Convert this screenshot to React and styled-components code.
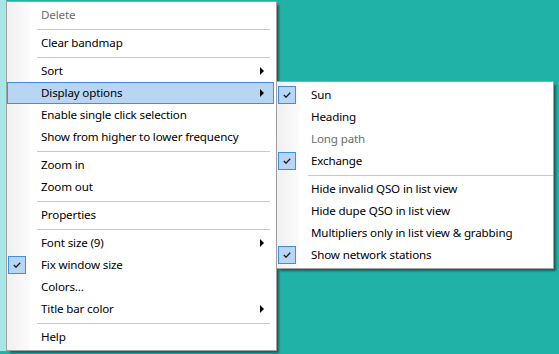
import React from "react";
import styled, { createGlobalStyle } from "styled-components";

const GlobalStyle = createGlobalStyle`
  html, body {
    margin: 0;
    padding: 0;
    width: 559px;
    height: 354px;
    overflow: hidden;
    font-family: "Noto Sans", "Open Sans", sans-serif;
    font-size: 11.6px;
    letter-spacing: -0.15px;
  }
`;

const Desktop = styled.div`
  display: flex;
  width: 559px;
  height: 354px;
  background: #21b2a7;
`;

const LeftStrip = styled.div`
  width: 6px;
  height: 351px;
  background: #a7e6e4;
  border-right: 1px solid #6fa9a6;
`;

const Stage = styled.div`
  position: relative;
  flex: 1;
  padding-top: 1px;
`;

const Menu = styled.div`
  width: ${(p) => p.$width}px;
  background: #fff;
  border: 1px solid #a0a0a0;
  padding: 2px 0;
  box-shadow: 3px 3px 2px -1px rgba(0, 0, 0, 0.45);
  position: relative;
  box-sizing: border-box;

  &::before {
    content: "";
    position: absolute;
    left: 0;
    top: 0;
    bottom: 0;
    width: 22px;
    background: linear-gradient(to right, #f0f0f0, #fbfbfb);
  }
`;

const MainMenu = styled(Menu)`
  margin-left: -1px;
`;

const SubMenu = styled(Menu)`
  position: absolute;
  left: 269px;
  top: 81px;
  z-index: 2;
`;

const Item = styled.div`
  position: relative;
  z-index: 1;
  height: 22px;
  display: flex;
  align-items: center;
  padding-left: 33px;
  padding-bottom: 1px;
  margin: 0 2px 0 0;
  color: ${(p) => (p.$disabled ? "#6d6d6d" : "#000")};
  white-space: nowrap;
  box-sizing: border-box;
  border: 1px solid ${(p) => (p.$active ? "#3d8ee4" : "transparent")};
  background: ${(p) => (p.$active ? "#b8d6f4" : "transparent")};
`;

const Check = styled.span`
  position: absolute;
  left: 0;
  top: 1px;
  width: 18px;
  height: 18px;
  box-sizing: border-box;
  border: 1px solid #3d8ee4;
  background: #b8d6f4;
  display: flex;
  align-items: center;
  justify-content: center;
`;

const Arrow = styled.span`
  position: absolute;
  right: 9px;
  top: 6px;
  width: 0;
  height: 0;
  border-top: 4px solid transparent;
  border-bottom: 4px solid transparent;
  border-left: 4px solid #000;
`;

const Separator = styled.div`
  position: relative;
  z-index: 1;
  height: 6px;
  display: flex;
  align-items: center;
  padding-left: ${(p) => p.$indent}px;
  padding-right: ${(p) => p.$right}px;

  &::after {
    content: "";
    flex: 1;
    height: 1px;
    background: #c8c8c8;
  }
`;

const CheckMark = () => (
  <svg width="8" height="6" viewBox="0 0 8 6">
    <polyline
      points="0.8,3 3,5.2 7.2,0.8"
      fill="none"
      stroke="#1a1a1a"
      strokeWidth="1.3"
    />
  </svg>
);

const mainItems = [
  { label: "Delete", disabled: true },
  "sep",
  { label: "Clear bandmap" },
  "sep",
  { label: "Sort", sub: true },
  { label: "Display options", sub: true, active: true },
  { label: "Enable single click selection" },
  { label: "Show from higher to lower frequency" },
  "sep",
  { label: "Zoom in" },
  { label: "Zoom out" },
  "sep",
  { label: "Properties" },
  "sep",
  { label: "Font size (9)", sub: true },
  { label: "Fix window size", checked: true },
  { label: "Colors..." },
  { label: "Title bar color", sub: true },
  "sep",
  { label: "Help" },
];

const subItems = [
  { label: "Sun", checked: true },
  { label: "Heading" },
  { label: "Long path", disabled: true },
  { label: "Exchange", checked: true },
  "sep",
  { label: "Hide invalid QSO in list view" },
  { label: "Hide dupe QSO in list view" },
  { label: "Multipliers only in list view & grabbing" },
  { label: "Show network stations", checked: true },
];

function renderItems(items, sepIndent, sepRight) {
  return items.map((it, i) =>
    it === "sep" ? (
      <Separator key={i} $indent={sepIndent} $right={sepRight} />
    ) : (
      <Item key={i} $disabled={it.disabled} $active={it.active}>
        {it.checked && (
          <Check>
            <CheckMark />
          </Check>
        )}
        {it.label}
        {it.sub && <Arrow />}
      </Item>
    )
  );
}

export default function App() {
  return (
    <>
      <GlobalStyle />
      <Desktop>
        <LeftStrip />
        <Stage>
          <MainMenu $width={271}>{renderItems(mainItems, 30, 6)}</MainMenu>
          <SubMenu $width={278}>{renderItems(subItems, 31, 0)}</SubMenu>
        </Stage>
      </Desktop>
    </>
  );
}
